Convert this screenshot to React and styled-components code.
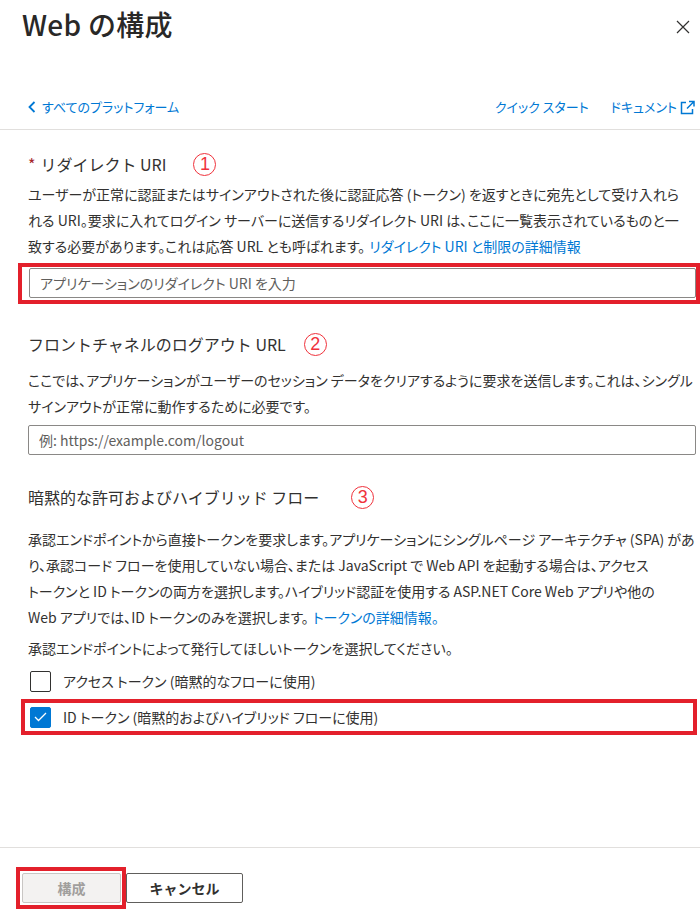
import React from 'react';
import styled, { createGlobalStyle } from 'styled-components';

const GlobalStyle = createGlobalStyle`
  html, body {
    margin: 0;
    padding: 0;
    background: #ffffff;
  }
  body {
    font-family: "Noto Sans CJK JP", "Noto Sans", sans-serif;
    color: #323130;
  }
  * {
    box-sizing: border-box;
  }
`;

const Panel = styled.div`
  width: 700px;
  height: 910px;
  display: flex;
  flex-direction: column;
  overflow: hidden;
`;

const Header = styled.div`
  display: flex;
  justify-content: space-between;
  align-items: flex-start;
  padding: 0 5px 0 22px;
`;

const Title = styled.h1`
  margin: 0;
  font-size: 28px;
  line-height: 48px;
  font-weight: 500;
  color: #292827;
  letter-spacing: 0.3px;
`;

const CloseButton = styled.button`
  width: 24px;
  height: 24px;
  margin-top: 15px;
  padding: 0;
  border: none;
  background: none;
  display: flex;
  align-items: center;
  justify-content: center;
`;

const LinkBar = styled.div`
  display: flex;
  align-items: center;
  margin-top: 49px;
  padding: 0 4px 12px 28px;
  border-bottom: 1px solid #e1dfdd;
`;

const LinkGroup = styled.div`
  display: flex;
  align-items: center;
  gap: 22px;
  margin-left: auto;
`;

const NavLink = styled.a`
  display: flex;
  align-items: center;
  gap: ${props => props.gap || 0}px;
  font-size: 13px;
  line-height: 20px;
  color: #0078d4;
  text-decoration: none;
  font-feature-settings: "palt";
  white-space: nowrap;
`;

const Content = styled.div`
  padding: 0 4px 0 28px;
`;

const SectionTitle = styled.div`
  display: flex;
  align-items: center;
  margin-top: ${props => props.mt}px;
  font-size: 16px;
  line-height: 24px;
  color: #323130;
`;

const Required = styled.span`
  color: #a4262c;
  margin-right: 5px;
`;

const Marker = styled.span`
  display: inline-flex;
  align-items: center;
  justify-content: center;
  width: 23px;
  height: 23px;
  margin-left: ${props => props.ml}px;
  border: 1.5px solid #f0323c;
  border-radius: 50%;
  color: #f0323c;
  font-family: "Liberation Sans", sans-serif;
  font-size: 18px;
  font-weight: 400;
  line-height: 1;
`;

const Description = styled.p`
  margin: ${props => props.mt}px 0 0;
  font-size: 14px;
  line-height: 26px;
  color: #323130;
  font-feature-settings: "palt";
`;

const Line = styled.span`
  display: block;
  white-space: nowrap;
`;

const InlineLink = styled.a`
  color: #0078d4;
  text-decoration: none;
  margin-left: 4px;
`;

const Highlight = styled.div`
  border: 4px solid #e3202b;
  margin: ${props => props.margin};
  padding: ${props => props.pad};
`;

const TextInput = styled.input`
  display: block;
  width: 100%;
  height: 30px;
  padding: 0 10px;
  border: 1px solid #8a8886;
  border-radius: 2px;
  font-family: "Noto Sans CJK JP", "Noto Sans", sans-serif;
  font-size: 14px;
  color: #323130;
  font-feature-settings: "palt";
  margin-top: ${props => props.mt || 0}px;

  &::placeholder {
    color: #605e5c;
  }
`;

const CheckRow = styled.label`
  display: flex;
  align-items: center;
  gap: 12px;
  height: ${props => props.h || 20}px;
  padding-left: ${props => props.pl || 0}px;
  margin-top: ${props => props.mt || 0}px;
  font-size: 14px;
  color: #323130;
  font-feature-settings: "palt";
  white-space: nowrap;
`;

const Box = styled.span`
  width: 21px;
  height: 21px;
  flex: none;
  border-radius: 2px;
  border: 1px solid ${props => (props.checked ? '#0078d4' : '#323130')};
  background: ${props => (props.checked ? '#0078d4' : '#ffffff')};
  display: flex;
  align-items: center;
  justify-content: center;
`;

const Footer = styled.div`
  margin-top: auto;
  border-top: 1px solid #e1dfdd;
  padding: 19px 0 1px 16px;
  display: flex;
  align-items: flex-end;
`;

const Button = styled.button`
  height: 30px;
  width: ${props => props.w}px;
  border-radius: 2px;
  font-family: "Noto Sans CJK JP", sans-serif;
  font-size: 14px;
  font-weight: 600;
  padding: 0;
  border: 1px solid ${props => (props.disabled ? '#c8c6c4' : '#605e5c')};
  background: ${props => (props.disabled ? '#f3f2f1' : '#ffffff')};
  color: ${props => (props.disabled ? '#a19f9d' : '#323130')};
  margin: ${props => props.margin || '0'};
`;

function ChevronLeft() {
  return (
    <svg width="8" height="12" viewBox="0 0 8 12">
      <polyline points="6.5,1 1.5,6 6.5,11" fill="none" stroke="#0078d4" strokeWidth="1.8" />
    </svg>
  );
}

function ExternalIcon() {
  return (
    <svg width="17" height="17" viewBox="0 0 17 17">
      <path d="M7 3.5H2.5v11h11V10" fill="none" stroke="#0078d4" strokeWidth="1.5" />
      <path d="M8 9.5l7-7M10 2.5h5v5" fill="none" stroke="#0078d4" strokeWidth="1.5" />
    </svg>
  );
}

function CloseIcon() {
  return (
    <svg width="14" height="14" viewBox="0 0 14 14">
      <path d="M1 1l12 12M13 1L1 13" stroke="#323130" strokeWidth="1.2" />
    </svg>
  );
}

function Check() {
  return (
    <svg width="13" height="10" viewBox="0 0 13 10">
      <polyline points="1,5 4.5,8.5 12,1" fill="none" stroke="#ffffff" strokeWidth="1.3" />
    </svg>
  );
}

export default function App() {
  return (
    <Panel>
      <GlobalStyle />
      <Header>
        <Title>Web の構成</Title>
        <CloseButton aria-label="閉じる">
          <CloseIcon />
        </CloseButton>
      </Header>

      <LinkBar>
        <NavLink gap={6}>
          <ChevronLeft />
          すべてのプラットフォーム
        </NavLink>
        <LinkGroup>
          <NavLink>クイック スタート</NavLink>
          <NavLink gap={2}>
            ドキュメント
            <ExternalIcon />
          </NavLink>
        </LinkGroup>
      </LinkBar>

      <Content>
        <SectionTitle mt={22}>
          <Required>*</Required>
          リダイレクト URI
          <Marker ml={27}>1</Marker>
        </SectionTitle>
        <Description mt={5}>
          <Line>ユーザーが正常に認証またはサインアウトされた後に認証応答 (トークン) を返すときに宛先として受け入れら</Line>
          <Line>れる URI。要求に入れてログイン サーバーに送信するリダイレクト URI は、ここに一覧表示されているものと一</Line>
          <Line>
            致する必要があります。これは応答 URL とも呼ばれます。
            <InlineLink>リダイレクト URI と制限の詳細情報</InlineLink>
          </Line>
        </Description>
        <Highlight margin="4px -4px 0 -10px" pad="1px 0 2px 7px">
          <TextInput placeholder="アプリケーションのリダイレクト URI を入力" />
        </Highlight>

        <SectionTitle mt={28}>
          フロントチャネルのログアウト URL
          <Marker ml={18}>2</Marker>
        </SectionTitle>
        <Description mt={11}>
          <Line>ここでは、アプリケーションがユーザーのセッション データをクリアするように要求を送信します。これは、シングル</Line>
          <Line>サインアウトが正常に動作するために必要です。</Line>
        </Description>
        <TextInput mt={6} placeholder="例: https://example.com/logout" />

        <SectionTitle mt={30}>
          暗黙的な許可およびハイブリッド フロー
          <Marker ml={32}>3</Marker>
        </SectionTitle>
        <Description mt={17}>
          <Line>承認エンドポイントから直接トークンを要求します。アプリケーションにシングルページ アーキテクチャ (SPA) があ</Line>
          <Line>り、承認コード フローを使用していない場合、または JavaScript で Web API を起動する場合は、アクセス</Line>
          <Line>トークンと ID トークンの両方を選択します。ハイブリッド認証を使用する ASP.NET Core Web アプリや他の</Line>
          <Line>
            Web アプリでは、ID トークンのみを選択します。
            <InlineLink>トークンの詳細情報。</InlineLink>
          </Line>
        </Description>
        <Description mt={5}>
          <Line>承認エンドポイントによって発行してほしいトークンを選択してください。</Line>
        </Description>
        <CheckRow mt={10} pl={2}>
          <Box />
          アクセス トークン (暗黙的なフローに使用)
        </CheckRow>
        <Highlight margin="8px -1px 0 -7px" pad="0 0 0 5px">
          <CheckRow h={28}>
            <Box checked>
              <Check />
            </Box>
            ID トークン (暗黙的およびハイブリッド フローに使用)
          </CheckRow>
        </Highlight>
      </Content>

      <Footer>
        <Highlight margin="0" pad="2px 1px 2px 2px">
          <Button w={99} disabled>
            構成
          </Button>
        </Highlight>
        <Button w={117} margin="0 0 6px 0">
          キャンセル
        </Button>
      </Footer>
    </Panel>
  );
}
